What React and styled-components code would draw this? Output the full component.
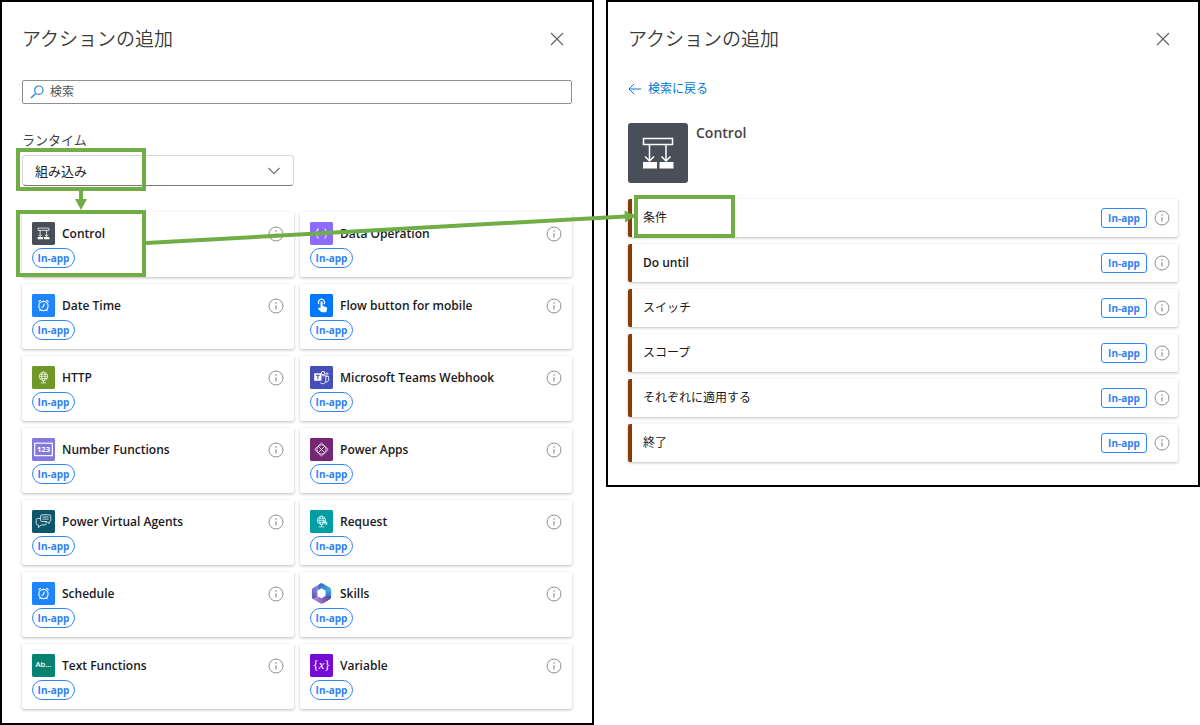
import React from "react";
import styled, { createGlobalStyle } from "styled-components";

const GlobalStyle = createGlobalStyle`
  * {
    box-sizing: border-box;
  }
  body {
    margin: 0;
    background: #fff;
    color: #242424;
    font-family: "Open Sans", "Noto Sans CJK JP", sans-serif;
  }
  button, input, select {
    font-family: inherit;
    margin: 0;
  }
`;

const GREEN = "#70ad47";

const Page = styled.div`
  position: relative;
  display: grid;
  grid-template-columns: 1fr 1fr;
  gap: 12px;
  align-items: start;
`;

const Panel = styled.section`
  border: 2px solid #000;
  background: #fff;
  padding: 23px 20px ${props => props.$bottom}px;
`;

const PanelHeader = styled.header`
  display: flex;
  align-items: center;
  justify-content: space-between;
  height: 28px;
`;

const PanelTitle = styled.h1`
  margin: 0;
  font-size: 19px;
  line-height: 28px;
  font-weight: 350;
  color: #3a3a3a;
`;

const IconButton = styled.button`
  display: flex;
  align-items: center;
  justify-content: center;
  width: ${props => props.$size}px;
  height: ${props => props.$size}px;
  padding: 0;
  border: 0;
  background: none;
  cursor: pointer;
`;

const SearchBox = styled.label`
  display: flex;
  align-items: center;
  gap: 6px;
  height: 24px;
  margin-top: 27px;
  padding: 0 7px;
  border: 1px solid #8f8f8f;
  border-radius: 2px;
`;

const SearchInput = styled.input`
  flex: 1;
  min-width: 0;
  padding: 0;
  border: 0;
  outline: 0;
  background: none;
  font-size: 12px;
  line-height: 18px;
  &::placeholder {
    color: #555;
    opacity: 1;
  }
`;

const FieldLabel = styled.label`
  display: block;
  margin-top: 27px;
  font-size: 13px;
  line-height: 18px;
  color: #444;
`;

const SelectBox = styled.div`
  position: relative;
  width: calc(50% - 3px);
  margin-top: 6px;
`;

const Select = styled.select`
  display: block;
  width: 100%;
  height: 31px;
  padding: 0 30px 0 12px;
  appearance: none;
  border: 1px solid #d6d6d6;
  border-bottom-color: #777;
  border-radius: 4px;
  background: #fff;
  color: #242424;
  font-size: 13px;
`;

const SelectArrow = styled.svg`
  position: absolute;
  right: 14px;
  top: 12px;
  pointer-events: none;
`;

const CardGrid = styled.ul`
  display: grid;
  grid-template-columns: 1fr 1fr;
  gap: 7px 6px;
  margin: 26px 0 0;
  padding: 0;
  list-style: none;
`;

const Card = styled.li`
  position: relative;
  height: 65px;
  padding: 10px 10px 0;
  border-radius: 2px;
  box-shadow: 0 1px 3px rgba(0, 0, 0, 0.26);
`;

const CardTop = styled.div`
  display: flex;
  align-items: center;
  height: 23px;
`;

const CardName = styled.button`
  flex: 1;
  padding: 0 7px;
  border: 0;
  background: none;
  text-align: left;
  font-size: 12px;
  line-height: 18px;
  font-weight: 560;
  color: #1a1a1a;
  cursor: pointer;
`;

const Pill = styled.span`
  display: flex;
  align-items: center;
  justify-content: center;
  width: 43px;
  height: 20px;
  margin-top: 3px;
  border: 1px solid #3385ff;
  border-radius: 10px;
  color: #2f80f5;
  font-size: 10px;
  font-weight: 700;
`;

const Tag = styled(Pill)`
  width: 46px;
  margin: 0 7px 0 0;
  border-radius: 3px;
`;

const BackLink = styled.a`
  display: flex;
  align-items: center;
  gap: 7px;
  width: fit-content;
  margin-top: 27px;
  font-size: 12px;
  line-height: 18px;
  color: #0078d4;
  text-decoration: none;
`;

const Connector = styled.div`
  display: flex;
  gap: 8px;
  margin-top: 25px;
`;

const ConnectorName = styled.h2`
  margin: 0;
  font-size: 14px;
  line-height: 20px;
  font-weight: 600;
  color: #444;
`;

const ActionList = styled.ul`
  display: flex;
  flex-direction: column;
  gap: 7px;
  margin: 16px 0 0;
  padding: 0;
  list-style: none;
`;

const ActionRow = styled.li`
  position: relative;
  display: flex;
  align-items: center;
  height: 38px;
  padding-right: 8px;
  border-left: 4px solid #8a3a06;
  border-radius: 2px;
  box-shadow: 0 1px 3px rgba(0, 0, 0, 0.26);
`;

const ActionName = styled(CardName)`
  padding: 0 11px;
  font-weight: ${props => (props.$latin ? 600 : 400)};
`;

// green frame laid over the control it points out
const Callout = styled.div`
  position: absolute;
  top: ${props => props.$top}px;
  left: ${props => props.$left}px;
  width: ${props => props.$width}px;
  height: ${props => props.$height}px;
  border: 4px solid ${GREEN};
  pointer-events: none;
`;

const DownArrow = styled.svg`
  position: absolute;
  left: 53px;
  top: 35px;
  overflow: visible;
`;

const LongArrow = styled.svg`
  position: absolute;
  left: 146px;
  top: 210px;
  width: calc(50% - 112px);
  height: 40px;
  overflow: visible;
  pointer-events: none;
`;

const line = { fill: "none", stroke: "#fff", strokeWidth: 1 };

const Alarm = () => (
  <g {...line} strokeWidth="1.2">
    <circle cx="12" cy="12.5" r="4.8" />
    <path d="M12.8 10l-.8 3-2 1M7 8.6A2 2 0 0 1 9.4 6.8M17 8.6A2 2 0 0 0 14.6 6.8M8.8 16.5l-1 1.2M15.2 16.5l1 1.2" />
  </g>
);

const Globe = () => (
  <g {...line} strokeWidth="0.9" opacity="0.85">
    <circle cx="12" cy="10.8" r="4.4" />
    <ellipse cx="12" cy="10.8" rx="1.9" ry="4.4" />
    <path d="M7.6 10.8h8.8M8.3 8.6h7.4M8.3 13h7.4M12 15.2v2.3M9.2 17.6h5.6" />
  </g>
);

const ControlGlyph = () => (
  <g {...line}>
    <path d="M6.4 6.4h11.2v2.4H6.4zM8.5 8.8V15M15.2 8.8V15M6.8 13.4l1.7 1.8 1.8-1.8M13.4 13.4l1.8 1.8 1.8-1.8" strokeWidth="0.8" />
    <path d="M6 15.7h5.5V18H6zM12.6 15.7h5.5V18h-5.5z" fill="#fff" stroke="none" />
  </g>
);

const glyphs = {
  control: <ControlGlyph />,
  data: (
    <g {...line} strokeWidth="1.1" opacity="0.85">
      <path d="M9 7.2c-1.6 0-1.6.7-1.6 2.2 0 1.6-.2 2.2-1.2 2.6 1 .4 1.2 1 1.2 2.6 0 1.5 0 2.2 1.6 2.2M15 7.2c1.6 0 1.6.7 1.6 2.2 0 1.6.2 2.2 1.2 2.6-1 .4-1.2 1-1.2 2.6 0 1.5 0 2.2-1.6 2.2" />
      <path d="M10.6 12h.9M12.6 12h.9" />
    </g>
  ),
  alarm: <Alarm />,
  touch: (
    <g>
      <path d="M9.4 10.6a3.2 3.2 0 1 1 5.2 0" fill="none" stroke="#fff" strokeWidth="1.1" />
      <path d="M11 8.6a1.1 1.1 0 0 1 2.2 0v4l3.6.9c.8.2 1.1.7 1 1.5l-.5 3c-.1.6-.5 1-1.1 1h-3.7c-.5 0-.8-.2-1.1-.5L8 15l.5-.5c.3-.3.7-.3 1.1-.2l1.4.4z" fill="#fff" />
    </g>
  ),
  globe: <Globe />,
  teams: (
    <g>
      <circle cx="13.6" cy="7.4" r="1.8" {...line} />
      <circle cx="17.6" cy="8.3" r="1.2" {...line} strokeWidth="0.8" />
      <path d="M12.5 10.2h4v5a3.3 3.3 0 0 1-5.8 2.2M16.7 10.8h2.7v3.6c0 1.4-1 2.4-2.6 2.4" {...line} strokeWidth="0.9" />
      <path d="M4.4 7.6h7.6v7.8H4.4z" fill="#fff" />
      <path d="M6.2 9.7h4M8.2 9.7v4.1" stroke="#464eb8" strokeWidth="1.1" />
    </g>
  ),
  number: (
    <g>
      <rect x="2.8" y="5.4" width="18.4" height="13" {...line} strokeWidth="1.2" />
      <text x="12" y="14.9" textAnchor="middle" fontSize="8" fontWeight="700" fill="#fff">123</text>
    </g>
  ),
  powerapps: (
    <g {...line} strokeWidth="0.9" opacity="0.9">
      <path d="M12 5.2L19 12l-7 6.8L5 12z" />
      <path d="M8.7 8.7l6.6 6.6M15.3 8.7l-6.6 6.6" />
      <path d="M8.7 8.7c1.3-2 5.3-2 6.6 0 2 1.3 2 5.3 0 6.6-1.3 2-5.3 2-6.6 0-2-1.3-2-5.3 0-6.6z" />
    </g>
  ),
  agents: (
    <g {...line} strokeWidth="0.9" opacity="0.9">
      <path d="M9 8.8V6.2c0-.8.5-1.2 1.2-1.2h8.2c.7 0 1.2.4 1.2 1.2v4.6c0 .7-.5 1.2-1.2 1.2h-.5v2.4L15.6 12H10.2M11 7.3h6.4M11 9.5h6.4" />
      <path d="M9 8.8H5.6c-.7 0-1.2.5-1.2 1.2v4.4c0 .7.5 1.2 1.2 1.2h1.2v2.8l2.8-2.8h3.9c.7 0 1.2-.5 1.2-1.2V12M9 8.8v2c0 .7.5 1.2 1.2 1.2" />
    </g>
  ),
  request: (
    <g>
      <Globe />
      <path d="M13.8 11.8l4.2 1.8-1.8.7 1.3 1.5" fill="none" stroke="#fff" strokeWidth="1" />
    </g>
  ),
  text: <text x="12" y="14" textAnchor="middle" fontSize="8" fontWeight="600" fill="#fff">Ab...</text>,
  variable: (
    <text x="12" y="15.5" textAnchor="middle" fontSize="13" fontFamily="Liberation Serif, serif" fill="#fff">
      {"{"}<tspan fontStyle="italic">x</tspan>{"}"}
    </text>
  ),
};

const SkillsLogo = () => (
  <svg width="23" height="23" viewBox="0 0 24 24" aria-hidden="true">
    <defs>
      <linearGradient id="skTop" x1="0" y1="0" x2="1" y2="1">
        <stop offset="0" stopColor="#2f62b8" />
        <stop offset="1" stopColor="#4fc0f0" />
      </linearGradient>
      <linearGradient id="skLeft" x1="0" y1="1" x2="1" y2="0">
        <stop offset="0" stopColor="#5a4fb0" />
        <stop offset="1" stopColor="#a9a6f0" />
      </linearGradient>
      <linearGradient id="skBottom" x1="0" y1="0" x2="1" y2="0">
        <stop offset="0" stopColor="#c08fe2" />
        <stop offset="1" stopColor="#5b3f9e" />
      </linearGradient>
      <linearGradient id="skRight" x1="0" y1="0" x2="0" y2="1">
        <stop offset="0" stopColor="#3fa6ea" />
        <stop offset="1" stopColor="#2b3aa5" />
      </linearGradient>
    </defs>
    <path d="M12 1L3.5 6C2.5 6.7 2 7.6 2 8.7v6.6c0 1.3.6 2.2 1.6 2.8L8 16V8l4-2z" fill="url(#skLeft)" />
    <path d="M10.5 1.700c1-.6 2-.6 3 0l7 4.100c1 .6 1.500 1.500 1.500 2.700v4l-6-3.500-4-2.500-3.500 2V4.500c0-1.200.8-2 2-2.800z" fill="url(#skTop)" />
    <path d="M22 8.500v6.800c0 1.200-.5 2-1.500 2.700l-7 4.200L12 17l4-2.500V8.800c3 .9 5.500 1.200 6-.3z" fill="url(#skRight)" />
    <path d="M2.300 16.600c1 1 2.700 1 4.200.2L9 15.300l3 1.700 4-2.200c2.500 1.200 5 .7 6-.3 0 1.700-.5 2.900-1.500 3.500l-7 4.200c-1 .6-2 .6-3 0l-7-4.100c-.6-.4-1-.9-1.200-1.500z" fill="url(#skBottom)" />
    <path d="M12 7.500l3.600 2v4.600l-3.600 2.100-3.600-2.100V9.500z" fill="#fff" stroke="#fff" strokeLinejoin="round" />
  </svg>
);

const AppIcon = ({ name, color }) => {
  if (name === "skills") return <SkillsLogo />;
  return (
    <svg width="23" height="23" viewBox="0 0 24 24" aria-hidden="true">
      <rect width="24" height="24" rx="1.5" fill={color} />
      {glyphs[name]}
    </svg>
  );
};

const InfoButton = ({ label }) => (
  <IconButton $size={16} aria-label={label + " info"}>
    <svg width="16" height="16" viewBox="0 0 16 16" aria-hidden="true">
      <circle cx="8" cy="8" r="7" fill="none" stroke="#8f8f8f" />
      <path d="M8 7.2v4.3" stroke="#8f8f8f" strokeWidth="1.2" />
      <circle cx="8" cy="5.1" r="0.8" fill="#8f8f8f" />
    </svg>
  </IconButton>
);

const CloseButton = () => (
  <IconButton $size={30} aria-label="閉じる">
    <svg width="14" height="14" viewBox="0 0 14 14" aria-hidden="true">
      <path d="M1 1l12 12M13 1L1 13" stroke="#606060" strokeWidth="1.1" />
    </svg>
  </IconButton>
);

const connectors = [
  { name: "Control", icon: "control", color: "#484f58" },
  { name: "Data Operation", icon: "data", color: "#8c6cff" },
  { name: "Date Time", icon: "alarm", color: "#1f85ff" },
  { name: "Flow button for mobile", icon: "touch", color: "#0077ff" },
  { name: "HTTP", icon: "globe", color: "#709727" },
  { name: "Microsoft Teams Webhook", icon: "teams", color: "#464eb8" },
  { name: "Number Functions", icon: "number", color: "#8378de" },
  { name: "Power Apps", icon: "powerapps", color: "#742774" },
  { name: "Power Virtual Agents", icon: "agents", color: "#0c556a" },
  { name: "Request", icon: "request", color: "#009da5" },
  { name: "Schedule", icon: "alarm", color: "#1f85ff" },
  { name: "Skills", icon: "skills" },
  { name: "Text Functions", icon: "text", color: "#058372" },
  { name: "Variable", icon: "variable", color: "#770bd6" },
];

const actions = ["条件", "Do until", "スイッチ", "スコープ", "それぞれに適用する", "終了"];

const ConnectorPanel = () => (
  <Panel $bottom={14}>
    <PanelHeader>
      <PanelTitle>アクションの追加</PanelTitle>
      <CloseButton />
    </PanelHeader>
    <SearchBox>
      <svg width="14" height="14" viewBox="0 0 14 14" aria-hidden="true">
        <path d="M5.6 8.4L1 13" stroke="#2b88d8" strokeWidth="1.4" />
        <circle cx="8.8" cy="5.2" r="4.2" fill="none" stroke="#2b88d8" strokeWidth="1.2" />
      </svg>
      <SearchInput type="text" placeholder="検索" aria-label="検索" />
    </SearchBox>
    <FieldLabel htmlFor="runtime">ランタイム</FieldLabel>
    <SelectBox>
      <Select id="runtime" defaultValue="builtin">
        <option value="builtin">組み込み</option>
      </Select>
      <SelectArrow width="12" height="8" viewBox="0 0 12 8" aria-hidden="true">
        <path d="M0.5 1L6 6.6 11.5 1" fill="none" stroke="#707070" strokeWidth="1.1" />
      </SelectArrow>
      <Callout $top={-7} $left={-6} $width={130} $height={43} />
      <DownArrow width="12" height="20" viewBox="0 0 12 20" aria-hidden="true">
        <path d="M4 0h4v9H4zM0 9h12L6 20z" fill={GREEN} />
      </DownArrow>
    </SelectBox>
    <CardGrid>
      {connectors.map(item => (
        <Card key={item.name}>
          <CardTop>
            <AppIcon name={item.icon} color={item.color} />
            <CardName>{item.name}</CardName>
            <InfoButton label={item.name} />
          </CardTop>
          <Pill>In-app</Pill>
          {item.name === "Control" && <Callout $top={-2} $left={-6} $width={130} $height={67} />}
        </Card>
      ))}
    </CardGrid>
  </Panel>
);

const ActionPanel = () => (
  <Panel $bottom={23}>
    <PanelHeader>
      <PanelTitle>アクションの追加</PanelTitle>
      <CloseButton />
    </PanelHeader>
    <BackLink href="#search">
      <svg width="13" height="12" viewBox="0 0 13 12" aria-hidden="true">
        <path d="M13 6H1M6 1L1 6l5 5" fill="none" stroke="#0078d4" />
      </svg>
      検索に戻る
    </BackLink>
    <Connector>
      <svg width="60" height="60" viewBox="0 0 60 60" aria-hidden="true">
        <rect width="60" height="60" rx="3" fill="#484f58" />
        <path d="M15.5 15.5h29v6h-29zM21.5 22v16M38 22v16M17 33.5l4.5 4.5 4.5-4.5M33.5 33.5l4.5 4.5 4.5-4.5" fill="none" stroke="#fff" strokeWidth="1.5" />
        <path d="M15 39h14v6.5H15zM31.5 39h14v6.5h-14z" fill="#fff" />
      </svg>
      <ConnectorName>Control</ConnectorName>
    </Connector>
    <ActionList>
      {actions.map((name, i) => (
        <ActionRow key={name}>
          <ActionName $latin={name === "Do until"}>{name}</ActionName>
          <Tag>In-app</Tag>
          <InfoButton label={name} />
          {i === 0 && <Callout $top={-4} $left={2} $width={101} $height={43} />}
        </ActionRow>
      ))}
    </ActionList>
  </Panel>
);

export default function App() {
  return (
    <>
      <GlobalStyle />
      <Page>
        <ConnectorPanel />
        <ActionPanel />
        <LongArrow aria-hidden="true">
          <line x1="0" y1="33" x2="100%" y2="6" stroke={GREEN} strokeWidth="4" />
          <svg x="100%" y="6" overflow="visible">
            <path d="M1 0L-9.5 -5.5L-9 6.5z" fill={GREEN} />
          </svg>
        </LongArrow>
      </Page>
    </>
  );
}
